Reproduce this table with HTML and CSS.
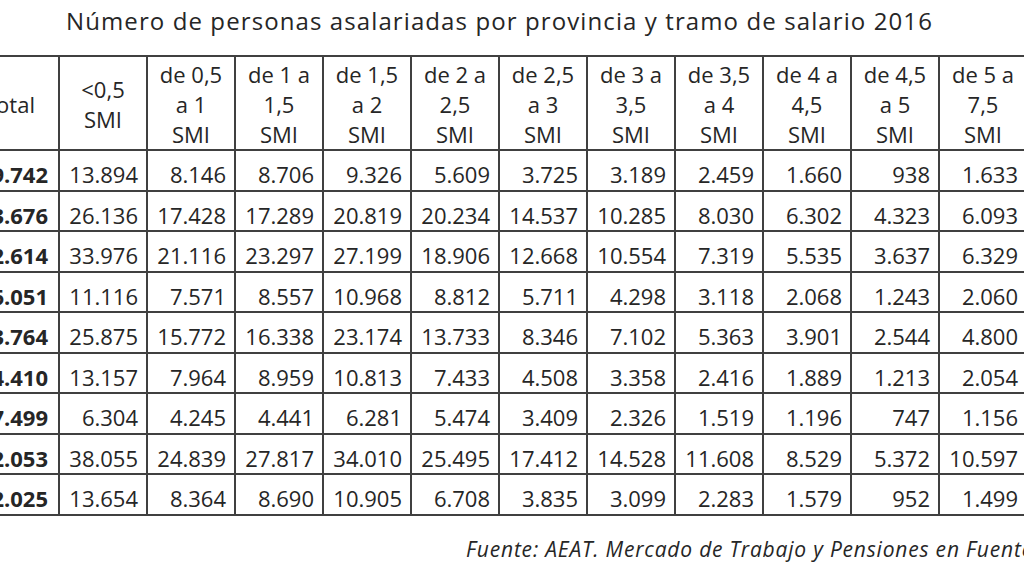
FILE: index.html
```html
<!DOCTYPE html>
<html lang="es">
<head>
<meta charset="utf-8">
<title>Número de personas asalariadas por provincia y tramo de salario 2016</title>
<link rel="stylesheet" href="styles.css">
</head>
<body>
<div class="page">
  <h1 class="title">Número de personas asalariadas por provincia y tramo de salario 2016</h1>
  <div class="table-wrap">
    <table class="data">
      <colgroup>
        <col class="c-total">
        <col class="c"><col class="c"><col class="c"><col class="c"><col class="c">
        <col class="c"><col class="c"><col class="c"><col class="c"><col class="c"><col class="c">
      </colgroup>
      <thead>
        <tr>
          <th>Total</th>
          <th>&lt;0,5<br>SMI</th>
          <th>de 0,5<br>a 1<br>SMI</th>
          <th>de 1 a<br>1,5<br>SMI</th>
          <th>de 1,5<br>a 2<br>SMI</th>
          <th>de 2 a<br>2,5<br>SMI</th>
          <th>de 2,5<br>a 3<br>SMI</th>
          <th>de 3 a<br>3,5<br>SMI</th>
          <th>de 3,5<br>a 4<br>SMI</th>
          <th>de 4 a<br>4,5<br>SMI</th>
          <th>de 4,5<br>a 5<br>SMI</th>
          <th>de 5 a<br>7,5<br>SMI</th>
        </tr>
      </thead>
      <tbody>
        <tr><td class="tot">69.742</td><td>13.894</td><td>8.146</td><td>8.706</td><td>9.326</td><td>5.609</td><td>3.725</td><td>3.189</td><td>2.459</td><td>1.660</td><td>938</td><td>1.633</td></tr>
        <tr><td class="tot">183.676</td><td>26.136</td><td>17.428</td><td>17.289</td><td>20.819</td><td>20.234</td><td>14.537</td><td>10.285</td><td>8.030</td><td>6.302</td><td>4.323</td><td>6.093</td></tr>
        <tr><td class="tot">212.614</td><td>33.976</td><td>21.116</td><td>23.297</td><td>27.199</td><td>18.906</td><td>12.668</td><td>10.554</td><td>7.319</td><td>5.535</td><td>3.637</td><td>6.329</td></tr>
        <tr><td class="tot">66.051</td><td>11.116</td><td>7.571</td><td>8.557</td><td>10.968</td><td>8.812</td><td>5.711</td><td>4.298</td><td>3.118</td><td>2.068</td><td>1.243</td><td>2.060</td></tr>
        <tr><td class="tot">143.764</td><td>25.875</td><td>15.772</td><td>16.338</td><td>23.174</td><td>13.733</td><td>8.346</td><td>7.102</td><td>5.363</td><td>3.901</td><td>2.544</td><td>4.800</td></tr>
        <tr><td class="tot">74.410</td><td>13.157</td><td>7.964</td><td>8.959</td><td>10.813</td><td>7.433</td><td>4.508</td><td>3.358</td><td>2.416</td><td>1.889</td><td>1.213</td><td>2.054</td></tr>
        <tr><td class="tot">47.499</td><td>6.304</td><td>4.245</td><td>4.441</td><td>6.281</td><td>5.474</td><td>3.409</td><td>2.326</td><td>1.519</td><td>1.196</td><td>747</td><td>1.156</td></tr>
        <tr><td class="tot">232.053</td><td>38.055</td><td>24.839</td><td>27.817</td><td>34.010</td><td>25.495</td><td>17.412</td><td>14.528</td><td>11.608</td><td>8.529</td><td>5.372</td><td>10.597</td></tr>
        <tr><td class="tot">72.025</td><td>13.654</td><td>8.364</td><td>8.690</td><td>10.905</td><td>6.708</td><td>3.835</td><td>3.099</td><td>2.283</td><td>1.579</td><td>952</td><td>1.499</td></tr>
      </tbody>
    </table>
  </div>
  <p class="source">Fuente: AEAT. Mercado de Trabajo y Pensiones en Fuentes Tributarias</p>
</div>
</body>
</html>
```

FILE: styles.css
```css
html, body {
  margin: 0;
  padding: 0;
  background: #ffffff;
}

.page {
  width: 1024px;
  height: 576px;
  overflow: hidden;
  font-family: "Open Sans", "DejaVu Sans", sans-serif;
  color: #262626;
}

.title {
  margin: 0;
  padding: 4px 0 0 66px;
  font-size: 24px;
  font-weight: 400;
  letter-spacing: 1.1px;
  line-height: 33px;
  white-space: nowrap;
}

.table-wrap {
  margin: 18px 0 0 -41px;
}

.data {
  border-collapse: collapse;
  table-layout: fixed;
  width: 1067px;
  font-size: 22px;
}

.c-total { width: 99px; }
.c { width: 88px; }

.data th,
.data td {
  border: 2px solid #404040;
  overflow: hidden;
  white-space: nowrap;
}

.data th {
  height: 94px;
  box-sizing: border-box;
  padding: 2px 0 0 0;
  font-weight: 400;
  line-height: 30px;
  text-align: center;
  vertical-align: middle;
}

.data td {
  height: 40.5px;
  box-sizing: border-box;
  padding: 9px 8px 0 0;
  line-height: 29px;
  text-align: right;
  vertical-align: middle;
}

.data td.tot {
  font-weight: 700;
  padding-right: 10px;
}

.source {
  margin: 19px 0 0 0;
  padding-left: 466px;
  font-size: 21px;
  font-style: italic;
  letter-spacing: 0.8px;
  line-height: 29px;
  white-space: nowrap;
}
```
